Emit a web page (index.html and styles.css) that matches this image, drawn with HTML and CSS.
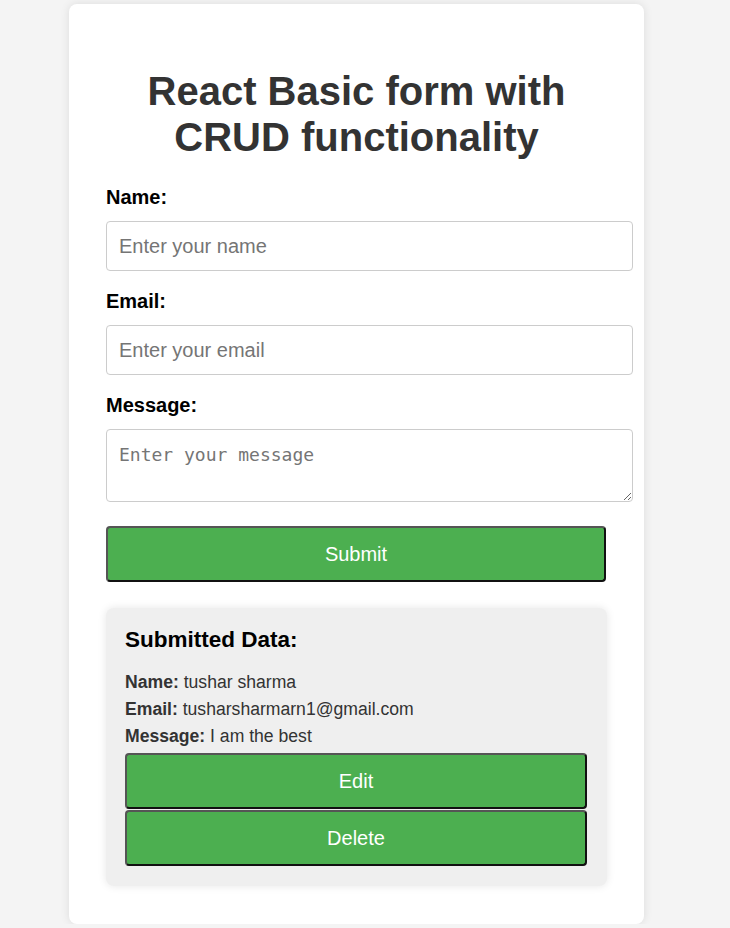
FILE: index.html
```html
<!DOCTYPE html>
<html>
<head>
<meta charset="utf-8">
<link rel="stylesheet" href="styles.css">
</head>
<body>
<div class="card">
  <h1 class="title">React Basic form with CRUD functionality</h1>
  <form class="form">
    <label class="label">Name:</label>
    <input class="field" type="text" placeholder="Enter your name">
    <label class="label">Email:</label>
    <input class="field" type="email" placeholder="Enter your email">
    <label class="label">Message:</label>
    <textarea class="area" placeholder="Enter your message"></textarea>
    <button class="btn submit" type="button">Submit</button>
  </form>
  <div class="data">
    <h2 class="data-title">Submitted Data:</h2>
    <p class="row"><strong>Name:</strong> tushar sharma</p>
    <p class="row"><strong>Email:</strong> tusharsharmarn1@gmail.com</p>
    <p class="row"><strong>Message:</strong> I am the best</p>
    <button class="btn action" type="button">Edit</button>
    <button class="btn action" type="button">Delete</button>
  </div>
</div>
</body>
</html>
```

FILE: styles.css
```css
html, body {
  margin: 0;
  padding: 0;
  background: #f4f4f4;
  font-family: "Liberation Sans", Arial, sans-serif;
}
body {
  padding: 4px 0 0 69px;
}
.card {
  box-sizing: border-box;
  width: 575px;
  background: #fff;
  border-radius: 8px;
  box-shadow: 0 0 10px rgba(0,0,0,0.1);
  padding: 37px 37px 38px;
}
.title {
  margin: 27px 0 26px;
  font-size: 40px;
  line-height: 46px;
  color: #333;
  text-align: center;
  font-weight: bold;
}
.form {
  display: flex;
  flex-direction: column;
  align-items: flex-start;
}
.label {
  display: block;
  font-size: 20px;
  line-height: 23px;
  font-weight: bold;
  color: #000;
  margin-bottom: 12px;
}
.field {
  box-sizing: border-box;
  width: 527px;
  height: 50px;
  padding: 12px;
  border: 1px solid #ccc;
  border-radius: 4px;
  font-family: "Liberation Sans", Arial, sans-serif;
  font-size: 20px;
  margin: 0 0 19px;
  outline: none;
}
.field::placeholder, .area::placeholder {
  color: #757575;
}
.area {
  box-sizing: border-box;
  width: 527px;
  height: 73px;
  padding: 14px 12px 10px;
  border: 1px solid #ccc;
  border-radius: 4px;
  font-family: "DejaVu Sans Mono", "Liberation Mono", monospace;
  font-size: 18px;
  line-height: 22px;
  margin: 0 0 24px;
  resize: vertical;
}
.btn {
  box-sizing: border-box;
  display: block;
  background: #4caf50;
  color: #fff;
  font-family: "Liberation Sans", Arial, sans-serif;
  font-size: 20px;
  height: 56px;
  border-width: 2px;
  border-style: solid;
  border-color: #555 #111 #111 #555;
  border-radius: 4px;
  padding: 0;
}
.submit {
  width: 500px;
}
.data {
  margin-top: 26px;
  background: #efefef;
  border-radius: 8px;
  box-shadow: 0 0 8px rgba(0,0,0,0.1);
  padding: 19px 19px 20px;
}
.data-title {
  margin: 0 0 16px;
  font-size: 22.5px;
  line-height: 26px;
  color: #000;
}
.row {
  margin: 0;
  font-size: 17.6px;
  line-height: 27px;
  color: #333;
}
.row:last-of-type {
  margin-bottom: 3px;
}
.action {
  width: 462px;
}
.action + .action {
  margin-top: 1px;
}
```
